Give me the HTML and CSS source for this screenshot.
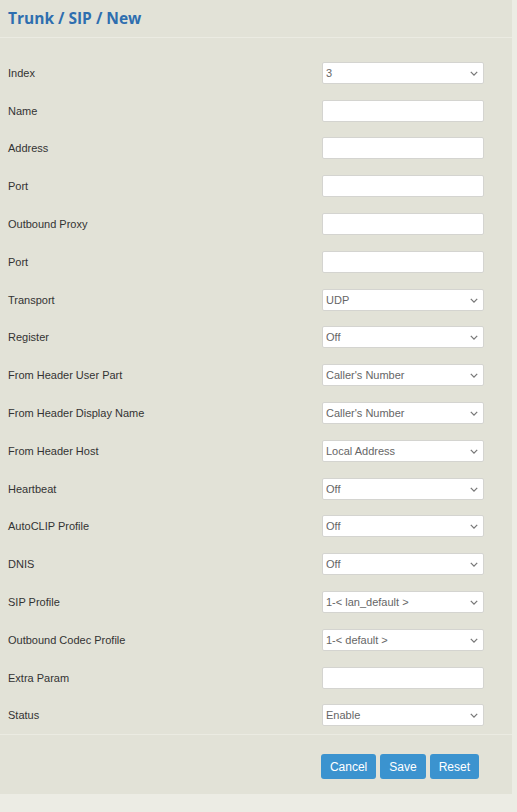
FILE: index.html
```html
<!DOCTYPE html>
<html>
<head>
<meta charset="utf-8">
<link rel="stylesheet" href="styles.css">
</head>
<body>
<div class="panel">
  <div class="header"><h1 class="title">Trunk / SIP / New</h1></div>
  <form class="form">
    <div class="row"><label class="label">Index</label><div class="sel"><select class="ctrl"><option>3</option></select><svg class="chev" viewBox="0 0 10 6"><path d="M1 1l4 4 4-4" /></svg></div></div>
    <div class="row"><label class="label">Name</label><input class="ctrl" type="text"></div>
    <div class="row"><label class="label">Address</label><input class="ctrl" type="text"></div>
    <div class="row"><label class="label">Port</label><input class="ctrl" type="text"></div>
    <div class="row"><label class="label">Outbound Proxy</label><input class="ctrl" type="text"></div>
    <div class="row"><label class="label">Port</label><input class="ctrl" type="text"></div>
    <div class="row"><label class="label">Transport</label><div class="sel"><select class="ctrl"><option>UDP</option></select><svg class="chev" viewBox="0 0 10 6"><path d="M1 1l4 4 4-4" /></svg></div></div>
    <div class="row"><label class="label">Register</label><div class="sel"><select class="ctrl"><option>Off</option></select><svg class="chev" viewBox="0 0 10 6"><path d="M1 1l4 4 4-4" /></svg></div></div>
    <div class="row"><label class="label">From Header User Part</label><div class="sel"><select class="ctrl"><option>Caller's Number</option></select><svg class="chev" viewBox="0 0 10 6"><path d="M1 1l4 4 4-4" /></svg></div></div>
    <div class="row"><label class="label">From Header Display Name</label><div class="sel"><select class="ctrl"><option>Caller's Number</option></select><svg class="chev" viewBox="0 0 10 6"><path d="M1 1l4 4 4-4" /></svg></div></div>
    <div class="row"><label class="label">From Header Host</label><div class="sel"><select class="ctrl"><option>Local Address</option></select><svg class="chev" viewBox="0 0 10 6"><path d="M1 1l4 4 4-4" /></svg></div></div>
    <div class="row"><label class="label">Heartbeat</label><div class="sel"><select class="ctrl"><option>Off</option></select><svg class="chev" viewBox="0 0 10 6"><path d="M1 1l4 4 4-4" /></svg></div></div>
    <div class="row"><label class="label">AutoCLIP Profile</label><div class="sel"><select class="ctrl"><option>Off</option></select><svg class="chev" viewBox="0 0 10 6"><path d="M1 1l4 4 4-4" /></svg></div></div>
    <div class="row"><label class="label">DNIS</label><div class="sel"><select class="ctrl"><option>Off</option></select><svg class="chev" viewBox="0 0 10 6"><path d="M1 1l4 4 4-4" /></svg></div></div>
    <div class="row"><label class="label">SIP Profile</label><div class="sel"><select class="ctrl"><option>1-&lt; lan_default &gt;</option></select><svg class="chev" viewBox="0 0 10 6"><path d="M1 1l4 4 4-4" /></svg></div></div>
    <div class="row"><label class="label">Outbound Codec Profile</label><div class="sel"><select class="ctrl"><option>1-&lt; default &gt;</option></select><svg class="chev" viewBox="0 0 10 6"><path d="M1 1l4 4 4-4" /></svg></div></div>
    <div class="row"><label class="label">Extra Param</label><input class="ctrl" type="text"></div>
    <div class="row"><label class="label">Status</label><div class="sel"><select class="ctrl"><option>Enable</option></select><svg class="chev" viewBox="0 0 10 6"><path d="M1 1l4 4 4-4" /></svg></div></div>
  </form>
  <div class="actions">
    <button class="btn" type="button">Cancel</button>
    <button class="btn" type="button">Save</button>
    <button class="btn" type="button">Reset</button>
  </div>
</div>
</body>
</html>
```
FILE: styles.css
```css
html, body {
  margin: 0;
  padding: 0;
}
body {
  background: #ecece4;
  font-family: "Liberation Sans", Arial, sans-serif;
  width: 517px;
  height: 812px;
  overflow: hidden;
}
.panel {
  width: 512px;
  background: #e2e2d7;
}
.header {
  height: 37px;
  border-bottom: 1px solid #ebebe2;
  display: flex;
  align-items: center;
  padding-left: 8px;
}
.title {
  margin: 0;
  margin-top: -1px;
  font-family: "Open Sans", "DejaVu Sans", sans-serif;
  font-weight: 700;
  font-size: 15.5px;
  color: #2e6eaf;
  letter-spacing: 0;
}
.form {
  padding-top: 16px;
  margin: 0;
}
.row {
  height: 37.8px;
  display: grid;
  grid-template-columns: 314px 162px;
  align-items: center;
  padding-left: 8px;
}
.label {
  font-size: 11px;
  color: #333;
}
.ctrl {
  box-sizing: border-box;
  width: 162px;
  height: 22px;
  margin: 0;
  border: 1px solid #d4d4d0;
  border-radius: 2px;
  background: #fff;
  font-family: "Liberation Sans", Arial, sans-serif;
  font-size: 11px;
  color: #666;
  padding: 0 0 0 3px;
  outline: none;
  display: block;
}
select.ctrl {
  -webkit-appearance: none;
  appearance: none;
}
.sel {
  position: relative;
  width: 162px;
}
.chev {
  position: absolute;
  right: 6px;
  top: 9px;
  width: 8px;
  height: 5px;
  fill: none;
  stroke: #777;
  stroke-width: 1.6;
  pointer-events: none;
}
.actions {
  border-top: 1px solid #ebebe2;
  display: flex;
  justify-content: flex-end;
  gap: 4px;
  padding: 19px 33px 15px 0;
}
.btn {
  height: 25px;
  border: none;
  border-radius: 3px;
  background: #3b93cf;
  color: #fff;
  font-family: "Liberation Sans", Arial, sans-serif;
  font-size: 12px;
  padding: 0 9px;
}
```
